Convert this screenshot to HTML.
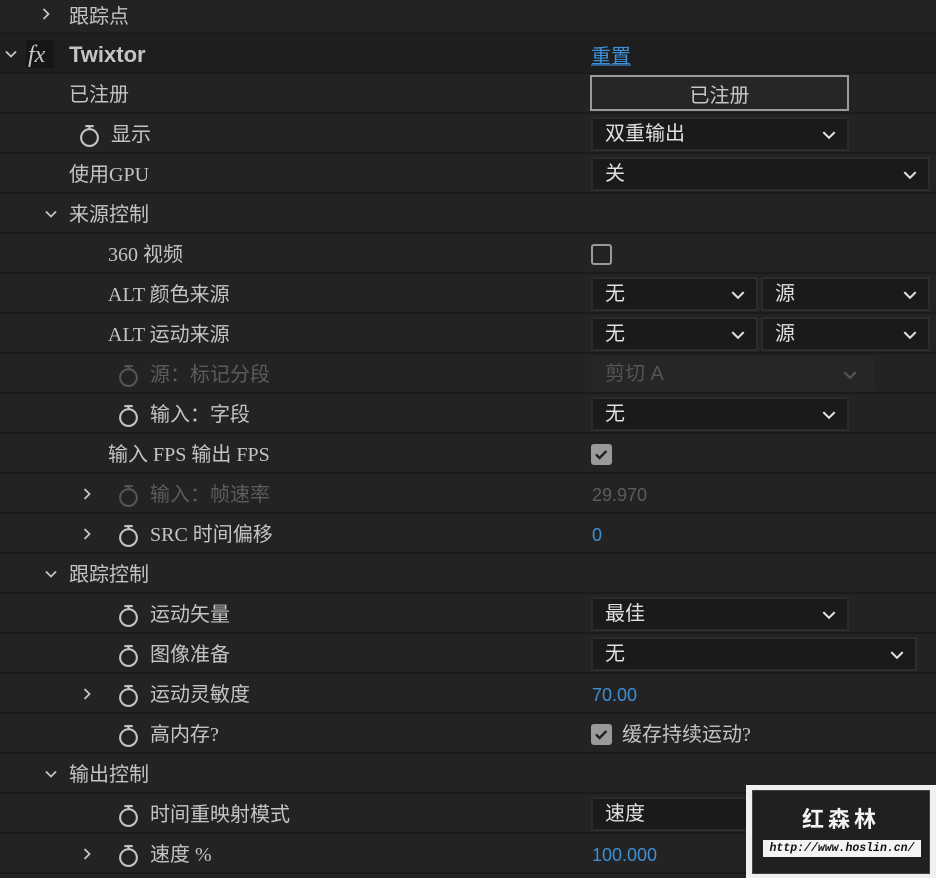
<!DOCTYPE html>
<html><head><meta charset="utf-8"><style>
body{margin:0;width:936px;height:878px;background:#232323;overflow:hidden;position:relative;font-family:"Liberation Serif","Noto Sans CJK SC",serif;color:#c4c4c4;font-size:20px}
.r{position:absolute;left:0;width:936px;height:38px;border-bottom:2px solid #1b1b1b;background:#232323}
.t{position:absolute;top:2px;line-height:38px;white-space:nowrap}
.d{color:#5c5c5c}
.sw{position:absolute;top:10px;width:21px;height:23px}
.chev{position:absolute;top:13px;width:14px;height:14px}
.dd{position:absolute;top:3px;height:34px;background:#1a1a1a;border:2px solid #2c2c2c;box-sizing:border-box;font-family:"Liberation Sans","Noto Sans CJK SC",sans-serif;color:#e0e0e0;font-size:20px;line-height:31px;padding-left:12px}
.dd svg{position:absolute;right:10px;top:8px}
.blue{color:#3d8fd6}
.cb{position:absolute;top:10px;left:591px;width:21px;height:21px;box-sizing:border-box;border:2px solid #9a9a9a;border-radius:3px}
</style></head><body>
<svg width="0" height="0" style="position:absolute"><defs>
<symbol id="sw" viewBox="0 0 20 22"><circle cx="10" cy="13" r="8" fill="none" stroke="currentColor" stroke-width="2"/><path d="M6 2h8M10 2v3" stroke="currentColor" stroke-width="2" fill="none"/></symbol>
<symbol id="dn" viewBox="0 0 14 14"><path d="M2 4.5l5 5 5-5" stroke="currentColor" stroke-width="1.8" fill="none"/></symbol>
<symbol id="rt" viewBox="0 0 14 14"><path d="M4.5 2l5 5-5 5" stroke="currentColor" stroke-width="1.8" fill="none"/></symbol>
</defs></svg>

<div class="r" style="top:-6px"><svg class="chev" style="left:39px;top:13px;color:#c4c4c4"><use href="#rt"/></svg><div class="t" style="left:69px;top:2px;font-family:'Noto Sans CJK SC',sans-serif">跟踪点</div></div>

<div class="r" style="top:34px;background:#1e1e1e"><svg class="chev" style="left:4px;color:#c4c4c4"><use href="#dn"/></svg>
<div style="position:absolute;left:26px;top:6px;width:28px;height:28px;background:#161616"></div><div class="t" style="left:28px;font-family:'Liberation Serif',serif;font-style:italic;font-size:24px;color:#c8c8c8">fx</div>
<div class="t" style="left:69px;font-family:'Liberation Sans','Noto Sans CJK SC',sans-serif;font-weight:bold;font-size:22px">Twixtor</div>
<div class="t blue" style="left:591px;font-family:'Noto Sans CJK SC',sans-serif;text-decoration:underline;text-decoration-color:#2a5a85">重置</div></div>

<div class="r" style="top:74px"><div class="t" style="left:69px">已注册</div>
<div style="position:absolute;left:590px;top:1px;width:259px;height:36px;border:2px solid #9a9a9a;box-sizing:border-box;background:#262626;text-align:center;line-height:34px;font-family:'Noto Sans CJK SC',sans-serif;color:#c8c8c8">已注册</div></div>

<div class="r" style="top:114px"><svg class="sw" style="left:79px;color:#c4c4c4"><use href="#sw"/></svg><div class="t" style="left:111px">显示</div>
<div class="dd" style="left:591px;width:258px">双重输出<svg width="16" height="16"><use href="#dn"/></svg></div></div>

<div class="r" style="top:154px"><div class="t" style="left:69px">使用GPU</div>
<div class="dd" style="left:591px;width:339px">关<svg width="16" height="16"><use href="#dn"/></svg></div></div>

<div class="r" style="top:194px"><svg class="chev" style="left:44px;color:#c4c4c4"><use href="#dn"/></svg><div class="t" style="left:69px">来源控制</div></div>

<div class="r" style="top:234px"><div class="t" style="left:108px">360 视频</div><div class="cb"></div></div>

<div class="r" style="top:274px"><div class="t" style="left:108px">ALT 颜色来源</div>
<div class="dd" style="left:591px;width:167px">无<svg width="16" height="16"><use href="#dn"/></svg></div>
<div class="dd" style="left:761px;width:169px">源<svg width="16" height="16"><use href="#dn"/></svg></div></div>

<div class="r" style="top:314px"><div class="t" style="left:108px">ALT 运动来源</div>
<div class="dd" style="left:591px;width:167px">无<svg width="16" height="16"><use href="#dn"/></svg></div>
<div class="dd" style="left:761px;width:169px">源<svg width="16" height="16"><use href="#dn"/></svg></div></div>

<div class="r" style="top:354px"><svg class="sw" style="left:118px;color:#555"><use href="#sw"/></svg><div class="t d" style="left:150px">源：标记分段</div>
<div class="dd" style="left:591px;width:283px;background:#262626;border-color:#262626;color:#555">剪切 A<svg width="16" height="16" style="right:14px"><use href="#dn"/></svg></div></div>

<div class="r" style="top:394px"><svg class="sw" style="left:118px;color:#c4c4c4"><use href="#sw"/></svg><div class="t" style="left:150px">输入：字段</div>
<div class="dd" style="left:591px;width:258px">无<svg width="16" height="16"><use href="#dn"/></svg></div></div>

<div class="r" style="top:434px"><div class="t" style="left:108px">输入 FPS 输出 FPS</div>
<div class="cb" style="background:#9a9a9a"><svg width="17" height="17" style="position:absolute;left:0;top:0"><path d="M3 8.5l3.5 3.5L13.5 5" stroke="#222" stroke-width="2.4" fill="none"/></svg></div></div>

<div class="r" style="top:474px"><svg class="chev" style="left:80px;color:#c4c4c4"><use href="#rt"/></svg><svg class="sw" style="left:118px;color:#555"><use href="#sw"/></svg><div class="t d" style="left:150px">输入：帧速率</div><div class="t d" style="left:592px;font-family:'Liberation Sans',sans-serif;font-size:18px">29.970</div></div>

<div class="r" style="top:514px"><svg class="chev" style="left:80px;color:#c4c4c4"><use href="#rt"/></svg><svg class="sw" style="left:118px;color:#c4c4c4"><use href="#sw"/></svg><div class="t" style="left:150px">SRC 时间偏移</div><div class="t blue" style="left:592px;font-family:'Liberation Sans',sans-serif;font-size:18px">0</div></div>

<div class="r" style="top:554px"><svg class="chev" style="left:44px;color:#c4c4c4"><use href="#dn"/></svg><div class="t" style="left:69px">跟踪控制</div></div>

<div class="r" style="top:594px"><svg class="sw" style="left:118px;color:#c4c4c4"><use href="#sw"/></svg><div class="t" style="left:150px">运动矢量</div>
<div class="dd" style="left:591px;width:258px">最佳<svg width="16" height="16"><use href="#dn"/></svg></div></div>

<div class="r" style="top:634px"><svg class="sw" style="left:118px;color:#c4c4c4"><use href="#sw"/></svg><div class="t" style="left:150px">图像准备</div>
<div class="dd" style="left:591px;width:326px">无<svg width="16" height="16"><use href="#dn"/></svg></div></div>

<div class="r" style="top:674px"><svg class="chev" style="left:80px;color:#c4c4c4"><use href="#rt"/></svg><svg class="sw" style="left:118px;color:#c4c4c4"><use href="#sw"/></svg><div class="t" style="left:150px">运动灵敏度</div><div class="t blue" style="left:592px;font-family:'Liberation Sans',sans-serif;font-size:18px">70.00</div></div>

<div class="r" style="top:714px"><svg class="sw" style="left:118px;color:#c4c4c4"><use href="#sw"/></svg><div class="t" style="left:150px">高内存?</div>
<div class="cb" style="background:#9a9a9a"><svg width="17" height="17" style="position:absolute;left:0;top:0"><path d="M3 8.5l3.5 3.5L13.5 5" stroke="#222" stroke-width="2.4" fill="none"/></svg></div><div class="t" style="left:622px">缓存持续运动?</div></div>

<div class="r" style="top:754px"><svg class="chev" style="left:44px;color:#c4c4c4"><use href="#dn"/></svg><div class="t" style="left:69px">输出控制</div></div>

<div class="r" style="top:794px"><svg class="sw" style="left:118px;color:#c4c4c4"><use href="#sw"/></svg><div class="t" style="left:150px">时间重映射模式</div>
<div class="dd" style="left:591px;width:258px">速度</div></div>

<div class="r" style="top:834px"><svg class="chev" style="left:80px;color:#c4c4c4"><use href="#rt"/></svg><svg class="sw" style="left:118px;color:#c4c4c4"><use href="#sw"/></svg><div class="t" style="left:150px">速度 %</div><div class="t blue" style="left:592px;font-family:'Liberation Sans',sans-serif;font-size:18px">100.000</div></div>

<div style="position:absolute;left:746px;top:785px;width:190px;height:93px;background:#f0f0f0"></div>
<div style="position:absolute;left:752px;top:790px;width:178px;height:84px;background:#202020;border:1px solid #444;box-sizing:border-box"></div>
<div style="position:absolute;left:752px;top:802px;width:178px;text-align:center;font-family:'Noto Sans CJK SC',sans-serif;font-weight:bold;font-size:22px;color:#f2f2f2;letter-spacing:4px">红森林</div>
<div style="position:absolute;left:763px;top:840px;width:158px;height:17px;background:#f4f4f4;color:#111;font-family:'Liberation Mono',monospace;font-style:italic;font-size:11.5px;line-height:17px;text-align:center;font-weight:bold;overflow:hidden">http://www.hoslin.cn/</div>
</body></html>
